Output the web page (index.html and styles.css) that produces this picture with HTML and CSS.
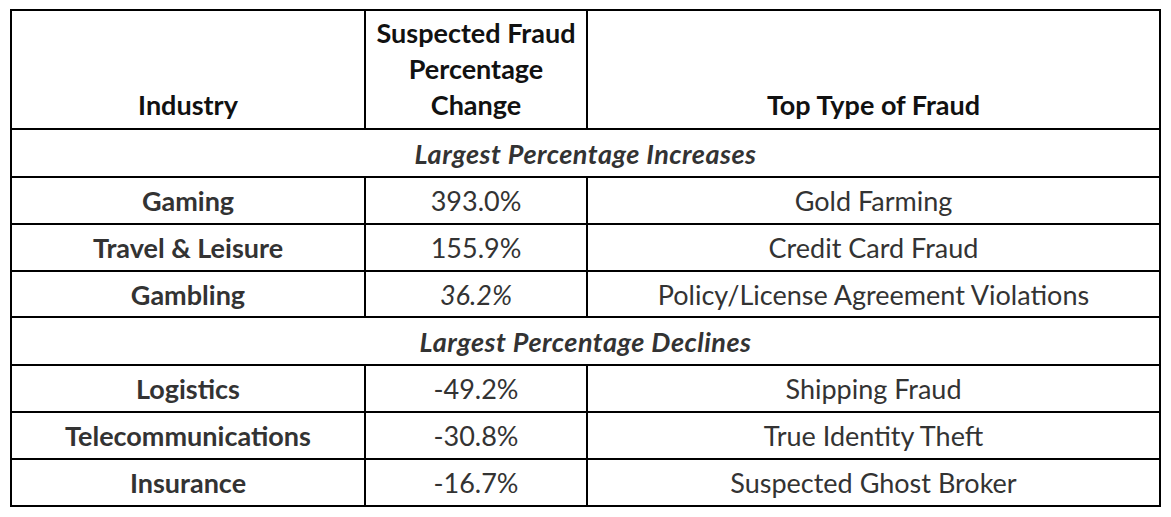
FILE: index.html
```html
<!DOCTYPE html>
<html>
<head>
<meta charset="utf-8">
<link rel="stylesheet" href="styles.css">
</head>
<body>
<div class="page">
<table class="fraud">
  <colgroup>
    <col class="c1"><col class="c2"><col class="c3">
  </colgroup>
  <thead>
    <tr class="head">
      <th>Industry</th>
      <th>Suspected Fraud Percentage Change</th>
      <th>Top Type of Fraud</th>
    </tr>
  </thead>
  <tbody>
    <tr class="section"><td colspan="3">Largest Percentage Increases</td></tr>
    <tr class="r47"><td class="ind">Gaming</td><td>393.0%</td><td>Gold Farming</td></tr>
    <tr class="r47"><td class="ind">Travel &amp; Leisure</td><td>155.9%</td><td>Credit Card Fraud</td></tr>
    <tr class="r46"><td class="ind">Gambling</td><td class="it">36.2%</td><td>Policy/License Agreement Violations</td></tr>
    <tr class="section"><td colspan="3">Largest Percentage Declines</td></tr>
    <tr class="r47"><td class="ind">Logistics</td><td>-49.2%</td><td>Shipping Fraud</td></tr>
    <tr class="r47"><td class="ind">Telecommunications</td><td>-30.8%</td><td>True Identity Theft</td></tr>
    <tr class="r47"><td class="ind">Insurance</td><td>-16.7%</td><td>Suspected Ghost Broker</td></tr>
  </tbody>
</table>
</div>
</body>
</html>
```
FILE: styles.css
```css
html, body {
  margin: 0;
  padding: 0;
  background: #fff;
}
.page {
  padding: 9px 0 0 10px;
}
.fraud {
  border-collapse: collapse;
  table-layout: fixed;
  width: 1149px;
  font-family: Lato, "Open Sans", sans-serif;
  font-size: 27px;
  color: #333;
}
.c1 { width: 354px; }
.c2 { width: 222px; }
.c3 { width: 573px; }
.fraud th, .fraud td {
  border: 2px solid #000;
  padding: 0 8px;
  text-align: center;
}
.head th {
  height: 112px;
  vertical-align: bottom;
  font-weight: 700;
  color: #111;
  line-height: 36px;
  padding-bottom: 5px;
}
.section td {
  height: 46px;
  font-style: italic;
  font-weight: 700;
  letter-spacing: 0.5px;
}
.r47 td { height: 45px; }
.r46 td { height: 44px; }
.ind { font-weight: 700; }
.it { font-style: italic; }
```
